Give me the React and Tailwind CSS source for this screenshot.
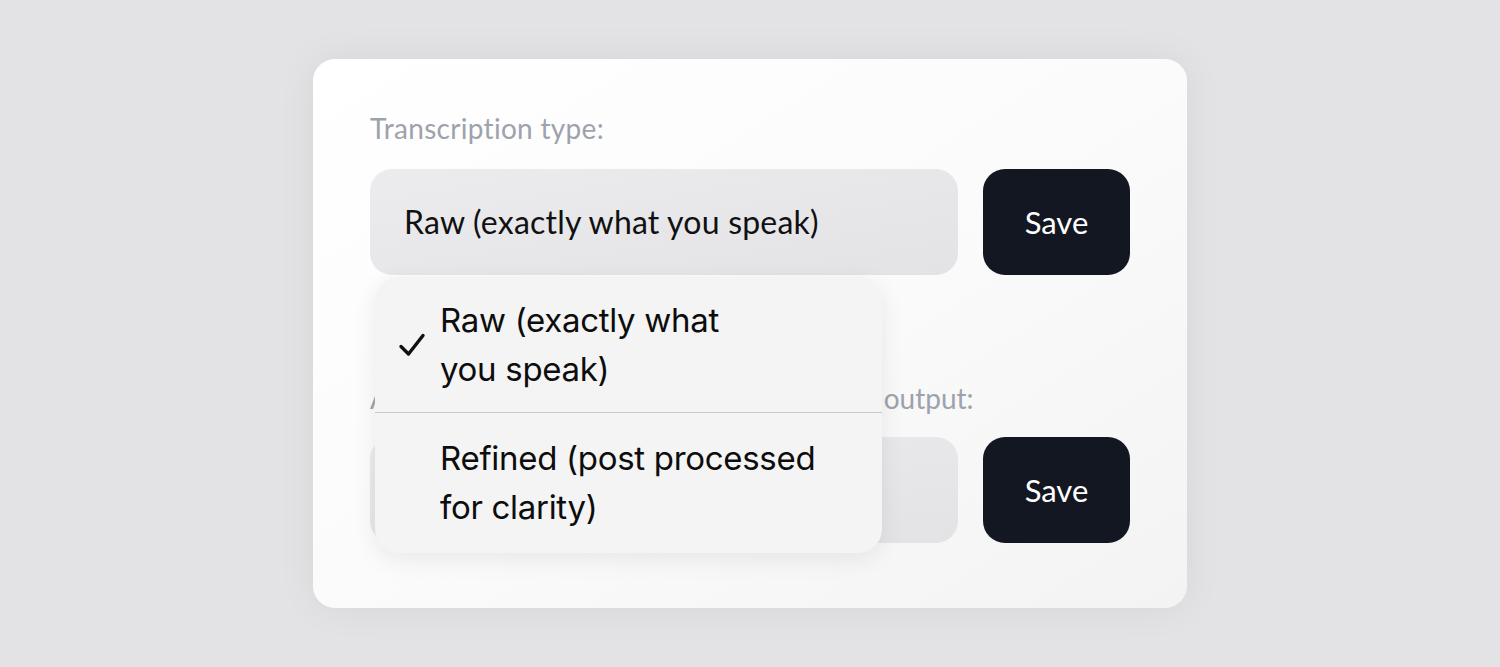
import React from "react";

function Check() {
  return (
    <svg width="28" height="28" viewBox="0 0 28 28" fill="none" className="shrink-0">
      <path d="M3 15.5 L10.5 23 L25 4.5" stroke="#111" strokeWidth="3.4" strokeLinecap="round" strokeLinejoin="round" />
    </svg>
  );
}

export default function App() {
  const brand = { fontFamily: "Lato, 'Open Sans', sans-serif" };
  const sys = { fontFamily: "Inter, Roboto, 'Liberation Sans', sans-serif" };
  return (
    <div className="min-h-screen w-full bg-[#e3e3e5] flex justify-center pt-[59px]" style={brand}>
      <div className="w-[874px] h-[549px] rounded-[22px] bg-gradient-to-br from-white via-[#fbfbfb] to-[#f3f3f3] shadow-[0_0_40px_rgba(0,0,0,0.06)] pt-[51px] px-[57px] flex flex-col">
        <div className="text-[28px] leading-[36px] text-[#9da2ac] font-normal tracking-[0.3px]">Transcription type:</div>
        <div className="mt-[23px] flex gap-[25px]">
          <div className="relative w-[588px] h-[106px]">
            <div className="h-full w-full rounded-[22px] bg-gradient-to-br from-[#ececee] to-[#e3e3e5] flex items-center pl-[34px] text-[32px] text-[#111] tracking-[0.2px]">
              Raw (exactly what you speak)
            </div>
            <div
              className="absolute left-[5px] top-[108px] w-[507px] h-[276px] z-10 rounded-[24px] bg-[#f4f4f4] shadow-[0_6px_24px_rgba(0,0,0,0.08)] flex flex-col overflow-hidden"
              style={sys}
            >
              <div className="h-[136px] flex items-center border-b border-[#c9c9cb]">
                <div className="w-[65px] flex justify-end pr-[14px]">
                  <Check />
                </div>
                <div className="text-[33px] leading-[49px] text-[#0d0d0d] tracking-[-0.3px]">
                  Raw (exactly what
                  <br />
                  you speak)
                </div>
              </div>
              <div className="flex-1 flex items-center pl-[65px]">
                <div className="text-[33px] leading-[49px] text-[#0d0d0d] tracking-[-0.3px]">
                  Refined (post processed
                  <br />
                  for clarity)
                </div>
              </div>
            </div>
          </div>
          <button className="w-[147px] h-[106px] rounded-[22px] bg-[#131722] text-white text-[31px] flex items-center justify-center">
            Save
          </button>
        </div>
        <div className="mt-[105px] text-[28px] leading-[36px] text-[#9da2ac] font-normal tracking-[0px] whitespace-nowrap">
          Apply formatting and punctuation to final output:
        </div>
        <div className="mt-[21px] flex gap-[25px]">
          <div className="w-[588px] h-[106px] rounded-[22px] bg-gradient-to-br from-[#ececee] to-[#e3e3e5]" />
          <button className="w-[147px] h-[106px] rounded-[22px] bg-[#131722] text-white text-[31px] flex items-center justify-center">
            Save
          </button>
        </div>
      </div>
    </div>
  );
}
